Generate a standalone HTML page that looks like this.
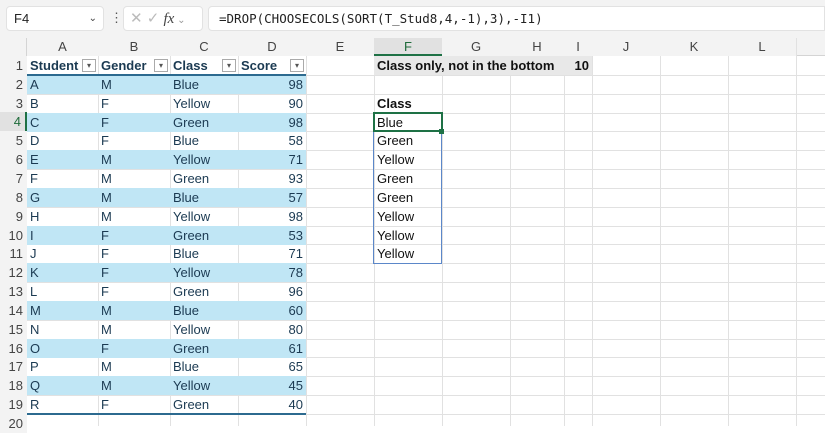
<!DOCTYPE html><html><head><meta charset="utf-8"><style>
*{margin:0;padding:0;box-sizing:border-box}
body{width:825px;height:426px;overflow:hidden;background:#fff;font-family:"Liberation Sans",sans-serif;position:relative;font-size:13px;color:#222}
.a{position:absolute}
.v{position:absolute;top:38px;height:388px;width:1px;background:#e1e1e1}
.h{position:absolute;left:0;width:825px;height:1px;background:#e1e1e1}
.rh{position:absolute;left:0;width:27px;text-align:right;padding-right:4px;color:#444;background:#f3f3f3;height:19px;line-height:19px}
.ch{position:absolute;top:38px;height:18px;line-height:18px;text-align:center;color:#444;background:#f3f3f3}
.c{position:absolute;height:19px;line-height:19px;color:#1b3a52;padding-left:3px;white-space:nowrap}
.band{position:absolute;left:27px;width:279px;height:19px;background:#c0e6f5}
.r{text-align:right;padding-right:3px;padding-left:0}
.dd{position:absolute;width:14px;height:13px;border:1px solid #aaa;background:#fff;top:59px;font-size:8px;line-height:11px;text-align:center;color:#555}
</style></head><body>
<div class="a" style="left:0;top:0;width:825px;height:38px;background:#f3f3f3"></div>
<div class="a" style="left:6px;top:6px;width:98px;height:25px;background:#fff;border:1px solid #e2e2e2;border-radius:4px;line-height:23px;padding-left:7px">F4<span style="position:absolute;right:6px;font-size:10px;color:#444">&#8964;</span></div>
<div class="a" style="left:110px;top:10px;color:#555">&#8942;</div>
<div class="a" style="left:123px;top:6px;width:80px;height:25px;background:#fff;border:1px solid #e2e2e2;border-radius:4px;color:#bbb;line-height:23px;padding-left:6px;font-size:15px">&#10005; &#10003; <i style="color:#444;font-family:'Liberation Serif',serif">fx</i><span style="font-size:10px;color:#999"> &#8964;</span></div>
<div class="a" style="left:208px;top:6px;width:617px;height:25px;background:#fff;border:1px solid #e2e2e2;border-radius:4px 0 0 4px;line-height:23px;padding-left:10px;font-family:'DejaVu Sans Mono','Liberation Mono',monospace;font-size:12.5px;color:#222">=DROP(CHOOSECOLS(SORT(T_Stud8,4,-1),3),-I1)</div>
<div class="a" style="left:0;top:38px;width:825px;height:18px;background:#f3f3f3;border-bottom:1px solid #d4d4d4"></div>
<div class="a" style="left:0;top:38px;width:27px;height:388px;background:#f3f3f3;border-right:1px solid #d4d4d4"></div>
<!-- grid -->
<div class="v" style="left:98px"></div><div class="v" style="left:170px"></div><div class="v" style="left:238px"></div><div class="v" style="left:306px"></div><div class="v" style="left:374px"></div><div class="v" style="left:442px"></div><div class="v" style="left:510px"></div><div class="v" style="left:564px"></div><div class="v" style="left:592px"></div><div class="v" style="left:660px"></div><div class="v" style="left:728px"></div><div class="v" style="left:796px"></div>
<div class="h" style="top:75px"></div><div class="h" style="top:94px"></div><div class="h" style="top:113px"></div><div class="h" style="top:131px"></div><div class="h" style="top:150px"></div><div class="h" style="top:169px"></div><div class="h" style="top:188px"></div><div class="h" style="top:207px"></div><div class="h" style="top:226px"></div><div class="h" style="top:244px"></div><div class="h" style="top:263px"></div><div class="h" style="top:282px"></div><div class="h" style="top:301px"></div><div class="h" style="top:320px"></div><div class="h" style="top:339px"></div><div class="h" style="top:357px"></div><div class="h" style="top:376px"></div><div class="h" style="top:395px"></div><div class="h" style="top:414px"></div>
<!-- bands -->
<div class="band" style="top:75px"></div><div class="band" style="top:113px"></div><div class="band" style="top:150px"></div><div class="band" style="top:188px"></div><div class="band" style="top:226px"></div><div class="band" style="top:263px"></div><div class="band" style="top:301px"></div><div class="band" style="top:339px"></div><div class="band" style="top:376px"></div>
<div class="a" style="left:374px;top:56px;width:218px;height:19px;background:#e8e8e8"></div>
<!-- column headers -->
<div class="ch" style="left:27px;width:71px">A</div><div class="ch" style="left:98px;width:72px">B</div><div class="ch" style="left:170px;width:68px">C</div><div class="ch" style="left:238px;width:68px">D</div><div class="ch" style="left:306px;width:68px">E</div>
<div class="ch" style="left:374px;width:68px;background:#e1e1e1;color:#1e6b3a;border-bottom:2px solid #1e7145">F</div>
<div class="ch" style="left:442px;width:68px">G</div><div class="ch" style="left:510px;width:54px">H</div><div class="ch" style="left:564px;width:28px">I</div><div class="ch" style="left:592px;width:68px">J</div><div class="ch" style="left:660px;width:68px">K</div><div class="ch" style="left:728px;width:68px">L</div>
<!-- row headers -->
<div class="rh" style="top:56px">1</div><div class="rh" style="top:75px">2</div><div class="rh" style="top:94px">3</div><div class="rh" style="top:112px;background:#e1e1e1;color:#1e6b3a;border-right:2px solid #1e7145">4</div><div class="rh" style="top:131px">5</div><div class="rh" style="top:150px">6</div><div class="rh" style="top:169px">7</div><div class="rh" style="top:188px">8</div><div class="rh" style="top:207px">9</div><div class="rh" style="top:226px">10</div><div class="rh" style="top:244px">11</div><div class="rh" style="top:263px">12</div><div class="rh" style="top:282px">13</div><div class="rh" style="top:301px">14</div><div class="rh" style="top:320px">15</div><div class="rh" style="top:339px">16</div><div class="rh" style="top:357px">17</div><div class="rh" style="top:376px">18</div><div class="rh" style="top:395px">19</div><div class="rh" style="top:414px">20</div>
<!-- table header -->
<div class="a" style="left:27px;top:74px;width:279px;height:2px;background:#2c6a8f"></div>
<div class="c" style="left:27px;top:56px;font-weight:bold">Student</div><div class="dd" style="left:82px">&#9662;</div>
<div class="c" style="left:98px;top:56px;font-weight:bold">Gender</div><div class="dd" style="left:154px">&#9662;</div>
<div class="c" style="left:170px;top:56px;font-weight:bold">Class</div><div class="dd" style="left:222px">&#9662;</div>
<div class="c" style="left:238px;top:56px;font-weight:bold">Score</div><div class="dd" style="left:290px">&#9662;</div>
<!-- data -->
<div class="c" style="left:27px;top:75px">A</div><div class="c" style="left:98px;top:75px">M</div><div class="c" style="left:170px;top:75px">Blue</div><div class="c r" style="left:238px;width:68px;top:75px">98</div>
<div class="c" style="left:27px;top:94px">B</div><div class="c" style="left:98px;top:94px">F</div><div class="c" style="left:170px;top:94px">Yellow</div><div class="c r" style="left:238px;width:68px;top:94px">90</div>
<div class="c" style="left:27px;top:113px">C</div><div class="c" style="left:98px;top:113px">F</div><div class="c" style="left:170px;top:113px">Green</div><div class="c r" style="left:238px;width:68px;top:113px">98</div>
<div class="c" style="left:27px;top:131px">D</div><div class="c" style="left:98px;top:131px">F</div><div class="c" style="left:170px;top:131px">Blue</div><div class="c r" style="left:238px;width:68px;top:131px">58</div>
<div class="c" style="left:27px;top:150px">E</div><div class="c" style="left:98px;top:150px">M</div><div class="c" style="left:170px;top:150px">Yellow</div><div class="c r" style="left:238px;width:68px;top:150px">71</div>
<div class="c" style="left:27px;top:169px">F</div><div class="c" style="left:98px;top:169px">M</div><div class="c" style="left:170px;top:169px">Green</div><div class="c r" style="left:238px;width:68px;top:169px">93</div>
<div class="c" style="left:27px;top:188px">G</div><div class="c" style="left:98px;top:188px">M</div><div class="c" style="left:170px;top:188px">Blue</div><div class="c r" style="left:238px;width:68px;top:188px">57</div>
<div class="c" style="left:27px;top:207px">H</div><div class="c" style="left:98px;top:207px">M</div><div class="c" style="left:170px;top:207px">Yellow</div><div class="c r" style="left:238px;width:68px;top:207px">98</div>
<div class="c" style="left:27px;top:226px">I</div><div class="c" style="left:98px;top:226px">F</div><div class="c" style="left:170px;top:226px">Green</div><div class="c r" style="left:238px;width:68px;top:226px">53</div>
<div class="c" style="left:27px;top:244px">J</div><div class="c" style="left:98px;top:244px">F</div><div class="c" style="left:170px;top:244px">Blue</div><div class="c r" style="left:238px;width:68px;top:244px">71</div>
<div class="c" style="left:27px;top:263px">K</div><div class="c" style="left:98px;top:263px">F</div><div class="c" style="left:170px;top:263px">Yellow</div><div class="c r" style="left:238px;width:68px;top:263px">78</div>
<div class="c" style="left:27px;top:282px">L</div><div class="c" style="left:98px;top:282px">F</div><div class="c" style="left:170px;top:282px">Green</div><div class="c r" style="left:238px;width:68px;top:282px">96</div>
<div class="c" style="left:27px;top:301px">M</div><div class="c" style="left:98px;top:301px">M</div><div class="c" style="left:170px;top:301px">Blue</div><div class="c r" style="left:238px;width:68px;top:301px">60</div>
<div class="c" style="left:27px;top:320px">N</div><div class="c" style="left:98px;top:320px">M</div><div class="c" style="left:170px;top:320px">Yellow</div><div class="c r" style="left:238px;width:68px;top:320px">80</div>
<div class="c" style="left:27px;top:339px">O</div><div class="c" style="left:98px;top:339px">F</div><div class="c" style="left:170px;top:339px">Green</div><div class="c r" style="left:238px;width:68px;top:339px">61</div>
<div class="c" style="left:27px;top:357px">P</div><div class="c" style="left:98px;top:357px">M</div><div class="c" style="left:170px;top:357px">Blue</div><div class="c r" style="left:238px;width:68px;top:357px">65</div>
<div class="c" style="left:27px;top:376px">Q</div><div class="c" style="left:98px;top:376px">M</div><div class="c" style="left:170px;top:376px">Yellow</div><div class="c r" style="left:238px;width:68px;top:376px">45</div>
<div class="c" style="left:27px;top:395px">R</div><div class="c" style="left:98px;top:395px">F</div><div class="c" style="left:170px;top:395px">Green</div><div class="c r" style="left:238px;width:68px;top:395px">40</div>
<div class="a" style="left:27px;top:413px;width:279px;height:2px;background:#2c6a8f"></div>
<!-- F column -->
<div class="c" style="left:374px;top:56px;font-weight:bold;color:#111">Class only, not in the bottom</div>
<div class="c r" style="left:564px;width:28px;top:56px;font-weight:bold;color:#111">10</div>
<div class="c" style="left:374px;top:94px;font-weight:bold;color:#111">Class</div>
<div class="a" style="left:373px;top:112px;width:69px;height:152px;border:1px solid #5b87c9"></div>
<div class="a" style="left:373px;top:112px;width:70px;height:20px;border:2px solid #1e7145;background:#fff"></div>
<div class="a" style="left:439px;top:129px;width:5px;height:5px;background:#1e7145"></div>
<div class="c" style="left:374px;top:113px;color:#111">Blue</div>
<div class="c" style="left:374px;top:131px;color:#111">Green</div>
<div class="c" style="left:374px;top:150px;color:#111">Yellow</div>
<div class="c" style="left:374px;top:169px;color:#111">Green</div>
<div class="c" style="left:374px;top:188px;color:#111">Green</div>
<div class="c" style="left:374px;top:207px;color:#111">Yellow</div>
<div class="c" style="left:374px;top:226px;color:#111">Yellow</div>
<div class="c" style="left:374px;top:244px;color:#111">Yellow</div>
</body></html>
